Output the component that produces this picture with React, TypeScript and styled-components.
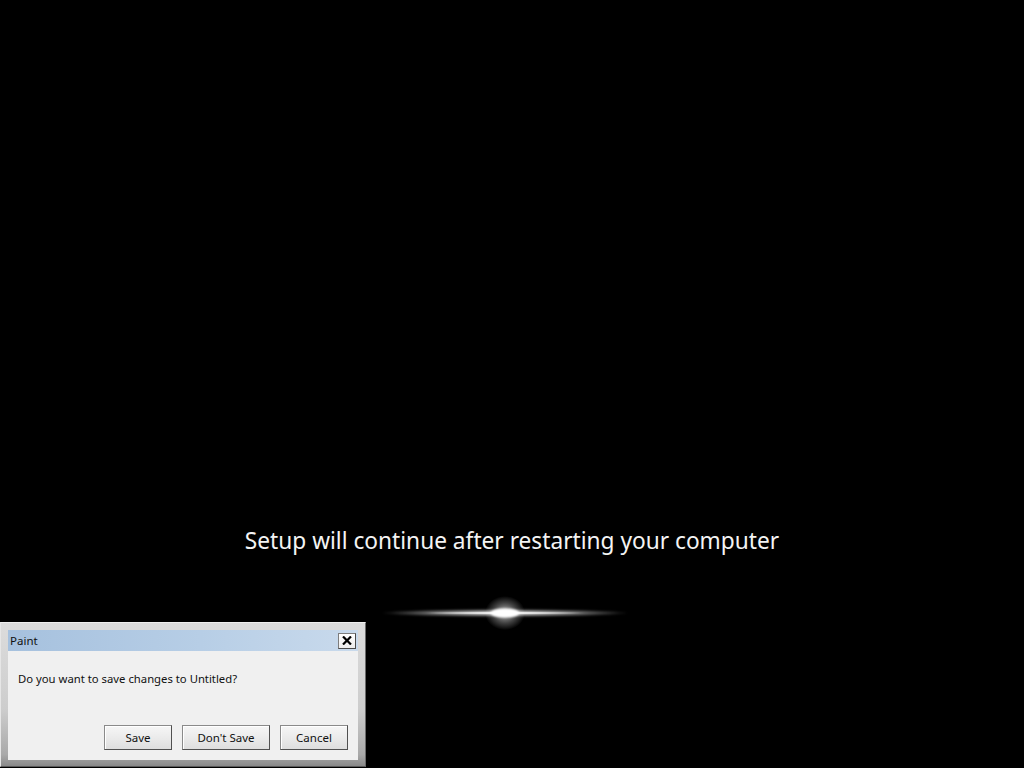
import styled, { createGlobalStyle } from "styled-components";

const GlobalStyle = createGlobalStyle`
  html, body {
    margin: 0;
    padding: 0;
    background: #000000;
  }
  body {
    font-family: "Noto Sans", "Open Sans", sans-serif;
  }
`;

const Screen = styled.div`
  position: relative;
  width: 1024px;
  height: 768px;
  background: #000000;
  overflow: hidden;
  display: flex;
  flex-direction: column;
  align-items: center;
  padding-top: 525px;
  box-sizing: border-box;
`;

const StatusText = styled.div`
  font-family: "Noto Sans", "Open Sans", sans-serif;
  font-size: 22.7px;
  line-height: 31px;
  color: #f4f4f4;
  white-space: nowrap;
`;

const GlowWrap = styled.div`
  margin-top: 37px;
  width: 260px;
  height: 40px;
`;

// Paint's "save changes" window, sitting on the desktop
const Window = styled.div`
  position: absolute;
  left: 0;
  top: 622px;
  width: 366px;
  height: 145px;
  box-sizing: border-box;
  padding: 7px 7px 6px 7px;
  display: flex;
  flex-direction: column;
  background: linear-gradient(180deg, #dcdcdc 0%, #cdcdcd 60%, #a9a9a9 92%, #8a8a8a 100%);
  border-top: 1px solid #efefef;
  border-left: 1px solid #e6e6e6;
  border-right: 1px solid #6a6a6a;
  border-bottom: 1px solid #5a5a5a;
  font-family: "Noto Sans", "Open Sans", sans-serif;
`;

const TitleBar = styled.div`
  height: 21px;
  display: flex;
  align-items: center;
  justify-content: space-between;
  padding: 0 2px 0 2px;
  background: linear-gradient(90deg, #a6c1de 0%, #b7cee6 55%, #c9daec 100%);
`;

const TitleText = styled.span`
  font-size: 11.5px;
  color: #111111;
`;

const CloseButton = styled.div`
  width: 18px;
  height: 16px;
  box-sizing: border-box;
  display: flex;
  align-items: center;
  justify-content: center;
  background: linear-gradient(180deg, #ffffff 0%, #ececec 100%);
  border: 1px solid #7d7d7d;
  border-right-color: #4a4a4a;
  border-bottom-color: #4a4a4a;
`;

const Body = styled.div`
  flex: 1;
  background: #f0f0f0;
  display: flex;
  flex-direction: column;
  justify-content: space-between;
  padding: 20px 10px 10px 10px;
`;

const Message = styled.div`
  font-size: 11.3px;
  line-height: 16px;
  color: #111111;
`;

const ButtonRow = styled.div`
  display: flex;
  justify-content: flex-end;
  gap: 10px;
`;

const DialogButton = styled.button<{ $wide?: boolean }>`
  width: ${(p) => (p.$wide ? "88px" : "68px")};
  height: 25px;
  box-sizing: border-box;
  padding: 0;
  font-family: "Noto Sans", "Open Sans", sans-serif;
  font-size: 11.5px;
  color: #111111;
  background: linear-gradient(180deg, #f6f6f6 0%, #ebebeb 50%, #dedede 100%);
  border: 1px solid #8a8a8a;
  border-right-color: #505050;
  border-bottom-color: #505050;
  box-shadow: inset 1px 1px 0 #ffffff;
  cursor: default;
`;

function Glow() {
  return (
    <svg width="260" height="40" viewBox="0 0 260 40">
      <defs>
        <radialGradient id="blob">
          <stop offset="0%" stopColor="#ffffff" stopOpacity="0.7" />
          <stop offset="60%" stopColor="#ffffff" stopOpacity="0.25" />
          <stop offset="100%" stopColor="#ffffff" stopOpacity="0" />
        </radialGradient>
        <radialGradient id="streak">
          <stop offset="0%" stopColor="#ffffff" stopOpacity="1" />
          <stop offset="55%" stopColor="#ffffff" stopOpacity="0.5" />
          <stop offset="100%" stopColor="#ffffff" stopOpacity="0" />
        </radialGradient>
        <filter id="soft" x="-20%" y="-100%" width="140%" height="300%">
          <feGaussianBlur stdDeviation="0.8" />
        </filter>
      </defs>
      <ellipse cx="123" cy="20" rx="20" ry="17" fill="url(#blob)" />
      <ellipse cx="123" cy="20" rx="124" ry="4" fill="url(#streak)" filter="url(#soft)" />
      <ellipse cx="123" cy="20" rx="85" ry="1.6" fill="url(#streak)" />
      <ellipse cx="123" cy="20" rx="14" ry="4.5" fill="#ffffff" filter="url(#soft)" />
    </svg>
  );
}

function CloseIcon() {
  return (
    <svg width="10" height="9" viewBox="0 0 10 9">
      <path d="M1 0.5 L9 8.5 M9 0.5 L1 8.5" stroke="#000000" strokeWidth="2.2" />
    </svg>
  );
}

export default function App() {
  return (
    <Screen>
      <GlobalStyle />
      <StatusText>Setup will continue after restarting your computer</StatusText>
      <GlowWrap>
        <Glow />
      </GlowWrap>
      <Window>
        <TitleBar>
          <TitleText>Paint</TitleText>
          <CloseButton>
            <CloseIcon />
          </CloseButton>
        </TitleBar>
        <Body>
          <Message>Do you want to save changes to Untitled?</Message>
          <ButtonRow>
            <DialogButton>Save</DialogButton>
            <DialogButton $wide>Don't Save</DialogButton>
            <DialogButton>Cancel</DialogButton>
          </ButtonRow>
        </Body>
      </Window>
    </Screen>
  );
}
